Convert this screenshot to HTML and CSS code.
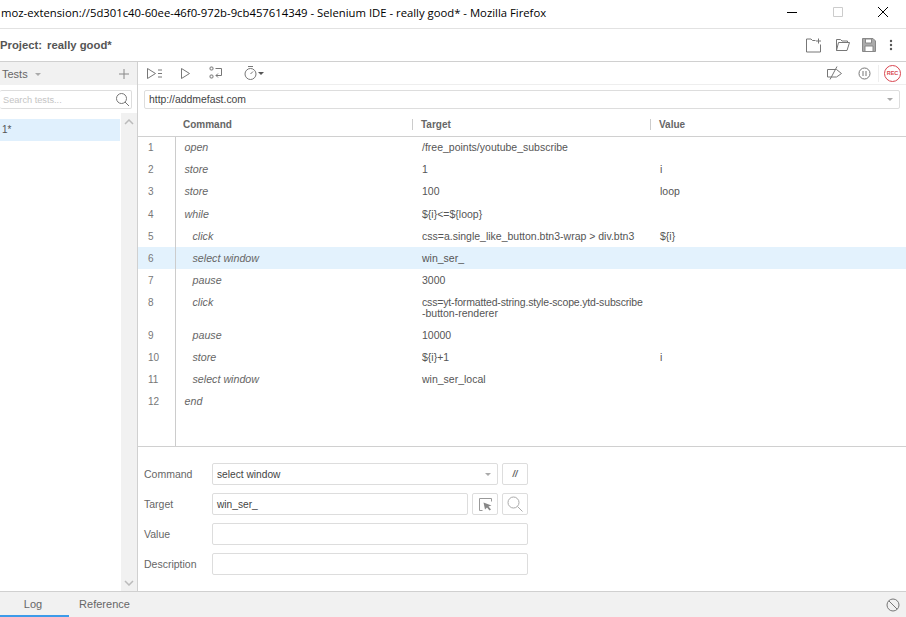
FILE: index.html
```html
<!DOCTYPE html>
<html lang="en">
<head>
<meta charset="utf-8">
<title>Selenium IDE</title>
<link rel="stylesheet" href="styles.css">
</head>
<body>
<div class="app">
  <header class="titlebar">
    <span class="title">moz-extension://5d301c40-60ee-46f0-972b-9cb457614349 - Selenium IDE - really good* - Mozilla Firefox</span>
    <div class="winctl">
      <svg width="12" height="12" viewBox="0 0 12 12"><path d="M1 6.500h10" stroke="#000" fill="none"/></svg>
      <svg width="12" height="12" viewBox="0 0 12 12"><path d="M1.500 1.500h9v9h-9z" stroke="#ccc" fill="none"/></svg>
      <svg width="12" height="12" viewBox="0 0 12 12"><path d="M1 1l10 10M11 1L1 11" stroke="#000" fill="none"/></svg>
    </div>
  </header>
  <div class="projectbar">
    <div class="project"><span>Project:</span><span>really good*</span></div>
    <div class="projicons">
      <svg width="17" height="15" viewBox="0 0 17 15" class="ic"><path d="M9.500 2.500H6.500L5 1H.5v13h14V6.500M12.500.5v5M10 3h5"/></svg>
      <svg width="15" height="14" viewBox="0 0 15 14" class="ic"><path d="M1.500 12.500v-11h4l1.500 1.500h5.500v2M1.500 12.500h10.500l2.500-8H3.500z"/></svg>
      <svg width="14" height="14" viewBox="0 0 14 14" class="ic save"><path d="M.5.5h10.500l2.500 2.500v10.500H.5z"/><path d="M3.500 1h6v4h-6zM3 8h8v5.500H3z" fill="#fff"/></svg>
      <svg width="4" height="12" viewBox="0 0 4 12" class="dots"><circle cx="2" cy="2" r="1.200" fill="#555"/><circle cx="2" cy="6" r="1.200" fill="#555"/><circle cx="2" cy="10" r="1.200" fill="#555"/></svg>
    </div>
  </div>
  <div class="workspace">
    <aside class="sidebar">
      <div class="sidehead">
        <span class="sidetitle">Tests <i class="caret"></i></span>
        <svg width="10" height="10" viewBox="0 0 10 10"><path d="M5 0v10M0 5h10" stroke="#888" fill="none"/></svg>
      </div>
      <div class="searchbox">
        <span>Search tests...</span>
        <svg width="15" height="15" viewBox="0 0 15 15" class="ic"><circle cx="6.500" cy="6.500" r="5"/><path d="M10 10l4 4"/></svg>
      </div>
      <div class="sidebody">
        <div class="testlist"><div class="testitem">1*</div></div>
        <div class="scrollbar">
          <svg width="10" height="6" viewBox="0 0 10 6"><path d="M1 5l4-4 4 4" stroke="#bbb" stroke-width="1.500" fill="none"/></svg>
          <svg width="10" height="6" viewBox="0 0 10 6"><path d="M1 1l4 4 4-4" stroke="#bbb" stroke-width="1.500" fill="none"/></svg>
        </div>
      </div>
    </aside>
    <main class="main">
      <div class="toolbar">
        <div class="tools">
          <svg width="17" height="13" viewBox="0 0 17 13" class="ic t-all"><path d="M1.500 1.500v10l8-5zM12 3h4M12 6.500h4M12 10h4"/></svg>
          <svg width="11" height="13" viewBox="0 0 11 13" class="ic t-one"><path d="M1.500 1.500v10l8-5z"/></svg>
          <svg width="14" height="14" viewBox="0 0 14 14" class="ic t-step"><rect x="1" y="1" width="3" height="3" rx="1"/><rect x="1" y="9" width="3" height="3" rx="1"/><path d="M6.500 2.500h6v7H7M9 7.500l-2 2 2 2"/></svg>
          <span class="speed">
            <svg width="15" height="16" viewBox="0 0 15 16" class="ic"><circle cx="7.500" cy="9" r="5.500"/><path d="M5 1.500h5M7.500 9L10 6.500"/></svg>
            <i class="caret dark"></i>
          </span>
        </div>
        <div class="tools right">
          <svg width="17" height="14" viewBox="0 0 17 14" class="ic"><path d="M1.500 3.500h9l5 4-5 3.500h-9zM11 .5L4 13.500"/></svg>
          <svg width="13" height="13" viewBox="0 0 13 13" class="ic"><circle cx="6.500" cy="6.500" r="5.500"/><path d="M5 4v5M8 4v5"/></svg>
          <span class="recwrap"><span class="rec">REC</span></span>
        </div>
      </div>
      <div class="urlbar">
        <div class="urlinput"><span>http://addmefast.com</span><i class="caret"></i></div>
      </div>
      <table class="cmds">
        <colgroup><col class="c1"><col class="c2"><col class="c3"><col class="c4"></colgroup>
        <thead>
          <tr><th></th><th>Command</th><th><span class="sep">Target</span></th><th><span class="sep">Value</span></th></tr>
        </thead>
        <tbody>
          <tr><td class="n">1</td><td class="cmd">open</td><td>/free_points/youtube_subscribe</td><td></td></tr>
          <tr><td class="n">2</td><td class="cmd">store</td><td>1</td><td>i</td></tr>
          <tr class="tall"><td class="n">3</td><td class="cmd">store</td><td>100</td><td>loop</td></tr>
          <tr><td class="n">4</td><td class="cmd">while</td><td>${i}&lt;=${loop}</td><td></td></tr>
          <tr><td class="n">5</td><td class="cmd ind">click</td><td>css=a.single_like_button.btn3-wrap &gt; div.btn3</td><td>${i}</td></tr>
          <tr class="sel"><td class="n">6</td><td class="cmd ind">select window</td><td>win_ser_</td><td></td></tr>
          <tr><td class="n">7</td><td class="cmd ind">pause</td><td>3000</td><td></td></tr>
          <tr class="multi"><td class="n">8</td><td class="cmd ind">click</td><td><span class="tight">css=yt-formatted-string.style-scope.ytd-subscribe</span><br>-button-renderer</td><td></td></tr>
          <tr><td class="n">9</td><td class="cmd ind">pause</td><td>10000</td><td></td></tr>
          <tr><td class="n">10</td><td class="cmd ind">store</td><td>${i}+1</td><td>i</td></tr>
          <tr><td class="n">11</td><td class="cmd ind">select window</td><td>win_ser_local</td><td></td></tr>
          <tr><td class="n">12</td><td class="cmd">end</td><td></td><td></td></tr>
          <tr class="filler"><td class="n"></td><td></td><td></td><td></td></tr>
        </tbody>
      </table>
      <form class="editor">
        <label class="lbl">Command</label>
        <div class="field"><span>select window</span><i class="caret"></i></div>
        <div class="btn"><span class="slashes">//</span></div>
        <label class="lbl">Target</label>
        <div class="targetrow">
          <div class="field fill"><span>win_ser_</span></div>
          <div class="btn"><svg width="15" height="15" viewBox="0 0 15 15"><path d="M4.500 13.500h-3v-12h12v3" stroke="#999" fill="none"/><path d="M5.500 5.500l8 3-3 1 2.500 3-1.500 1-2.500-3-2 2z" fill="#888"/></svg></div>
          <div class="btn"><svg width="16" height="16" viewBox="0 0 16 16" class="ic light"><circle cx="6.500" cy="6.500" r="5.500"/><path d="M10.500 10.500l5 5"/></svg></div>
        </div>
        <label class="lbl">Value</label>
        <div class="field span2"></div>
        <label class="lbl">Description</label>
        <div class="field span2"></div>
      </form>
    </main>
  </div>
  <footer class="bottombar">
    <div class="tabs"><span class="tab active">Log</span><span class="tab ref">Reference</span></div>
    <svg width="14" height="14" viewBox="0 0 14 14" class="ic"><circle cx="7" cy="7" r="6"/><path d="M2.800 2.800l8.400 8.400"/></svg>
  </footer>
</div>
</body>
</html>
```
FILE: styles.css
```css
* { box-sizing: border-box; }
html, body { margin: 0; padding: 0; }
body { background: #fff; color: #444; font-family: "Liberation Sans", Arial, sans-serif; font-size: 11px; }
.app { width: 906px; height: 617px; display: flex; flex-direction: column; overflow: hidden; }
.ic { fill: none; stroke: #777; stroke-width: 1; }
.ic.light { stroke: #aaa; }
.ic.save { fill: #aaa; stroke: #888; }

.titlebar { height: 29px; flex: none; display: flex; align-items: center; justify-content: space-between; border-bottom: 1px solid #e2e2e2; padding: 0 0 4px 1px; }
.title { font-family: "Open Sans", sans-serif; font-size: 11.300px; color: #000; white-space: nowrap; }
.winctl { display: flex; gap: 33.500px; padding-right: 17px; }

.projectbar { height: 33px; flex: none; display: flex; align-items: center; justify-content: space-between; border-bottom: 1px solid #d0d0d0; padding: 0 13px 0 0; }
.project { display: flex; gap: 5px; font-size: 11.300px; font-weight: bold; color: #555; }
.projicons { display: flex; align-items: center; gap: 12px; }
.projicons .dots { margin-left: 1px; }

.workspace { flex: 1; min-height: 0; display: flex; }
.sidebar { width: 138px; flex: none; display: flex; flex-direction: column; border-right: 1px solid #d0d0d0; }
.sidehead { height: 23px; flex: none; background: #f1f1f1; display: flex; align-items: center; justify-content: space-between; padding: 0 8px 0 2px; }
.sidetitle { font-size: 11px; color: #666; }
.caret { display: inline-block; width: 0; height: 0; border: 3px solid transparent; border-top: 3px solid #aaa; border-bottom: 0; margin-left: 4px; vertical-align: middle; }
.caret.dark { border-top-color: #555; margin-left: 0; }
.searchbox { height: 19px; margin: 5px 5px 0 0; border: 1px solid #ddd; border-left: 0; border-radius: 2px; display: flex; align-items: center; justify-content: space-between; padding: 0 1px 0 3px; font-size: 9.200px; color: #c4c4c4; flex: none; }
.sidebody { flex: 1; min-height: 0; display: flex; margin-top: 4px; }
.testlist { flex: 1; padding-top: 6px; }
.testitem { height: 22px; background: #e0f0fd; color: #555; padding-left: 2px; line-height: 22px; font-size: 10px; }
.scrollbar { width: 16px; margin-left: 1px; background: #f1f1f1; display: flex; flex-direction: column; justify-content: space-between; align-items: center; padding: 6px 0 5px; }

.main { flex: 1; min-width: 0; display: flex; flex-direction: column; }
.toolbar { height: 23px; flex: none; display: flex; justify-content: space-between; align-items: center; border-bottom: 1px solid #eee; padding: 0 5px 0 8px; }
.tools { display: flex; align-items: center; }
.t-one { margin-left: 17px; }
.t-step { margin-left: 18px; }
.speed { display: flex; align-items: center; margin-left: 20px; }
.tools.right svg + svg { margin-left: 15px; }
.recwrap { border-left: 1px solid #eee; padding-left: 5px; margin-left: 7px; display: flex; }
.rec { width: 17px; height: 17px; border: 1px solid #d9454f; border-radius: 50%; color: #d9454f; font-size: 5.500px; font-weight: bold; display: flex; align-items: center; justify-content: center; }
.urlbar { height: 29px; flex: none; padding: 5px 6px 5px 6px; }
.urlinput { height: 19px; border: 1px solid #ddd; border-radius: 2px; display: flex; align-items: center; justify-content: space-between; padding: 0 6px 0 4px; color: #444; font-size: 10.400px; }

.cmds { width: 768px; flex: none; border-collapse: collapse; table-layout: fixed; font-size: 10.500px; color: #555; }
.c1 { width: 37px; } .c2 { width: 236px; } .c3 { width: 238px; } .c4 { width: 257px; }
.cmds th { height: 22px; padding: 0; text-align: left; font-size: 10px; font-weight: bold; color: #666; border-bottom: 1px solid #d0d0d0; }
.cmds th:nth-child(2) { padding-left: 8px; }
.sep { display: block; border-left: 1px solid #ccc; padding-left: 8px; margin-left: 1px; height: 11px; line-height: 11px; }
.cmds td { height: 22px; padding: 0 0 0 11px; vertical-align: middle; white-space: nowrap; }
.cmds td.n { border-right: 1px solid #ccc; padding-left: 10px; color: #777; font-size: 10px; }
.cmds td.cmd { font-style: italic; font-size: 10.700px; color: #666; padding-left: 9px; }
.cmds td.ind { padding-left: 17px; }
.cmds tr.tall td { height: 23px; padding-bottom: 1px; }
.cmds tr.multi td { height: 33px; vertical-align: top; padding-top: 6px; line-height: 11px; }
.cmds tr.sel td { background: #e3f2fd; }
.cmds tr.filler td { height: 34px; }
.tight { letter-spacing: -0.160px; }

.editor { flex: 1; border-top: 1px solid #d0d0d0; padding: 16px 378px 0 6px; display: grid; grid-template-columns: 63px 1fr 26px; grid-auto-rows: 22px; row-gap: 8px; column-gap: 5px; align-items: center; width: 100%; }
.lbl { color: #666; font-size: 10.500px; }
.field { height: 22px; border: 1px solid #ddd; border-radius: 2px; display: flex; align-items: center; justify-content: space-between; padding: 0 6px 0 4px; color: #444; font-size: 10.200px; }
.field:nth-child(2) { margin-right: -1px; }
.fill { flex: 1; min-width: 0; }
.span2 { grid-column: 2 / 4; }
.targetrow { grid-column: 2 / 4; display: flex; gap: 4px; }
.btn { width: 26px; height: 22px; flex: none; border: 1px solid #ddd; border-radius: 2px; display: flex; align-items: center; justify-content: center; }
.slashes { font-style: italic; font-weight: bold; font-size: 9px; color: #666; }

.bottombar { height: 26px; flex: none; background: #f1f1f1; border-top: 1px solid #d0d0d0; display: flex; justify-content: space-between; align-items: center; padding-right: 6px; }
.tabs { display: flex; align-self: stretch; }
.tab { width: 69px; display: flex; align-items: center; justify-content: center; padding-top: 1px; font-size: 11px; color: #666; border-bottom: 2px solid transparent; }
.tab.active { border-bottom-color: #3d9be9; padding-right: 3px; }
.tab.ref { padding-left: 2px; }
```
